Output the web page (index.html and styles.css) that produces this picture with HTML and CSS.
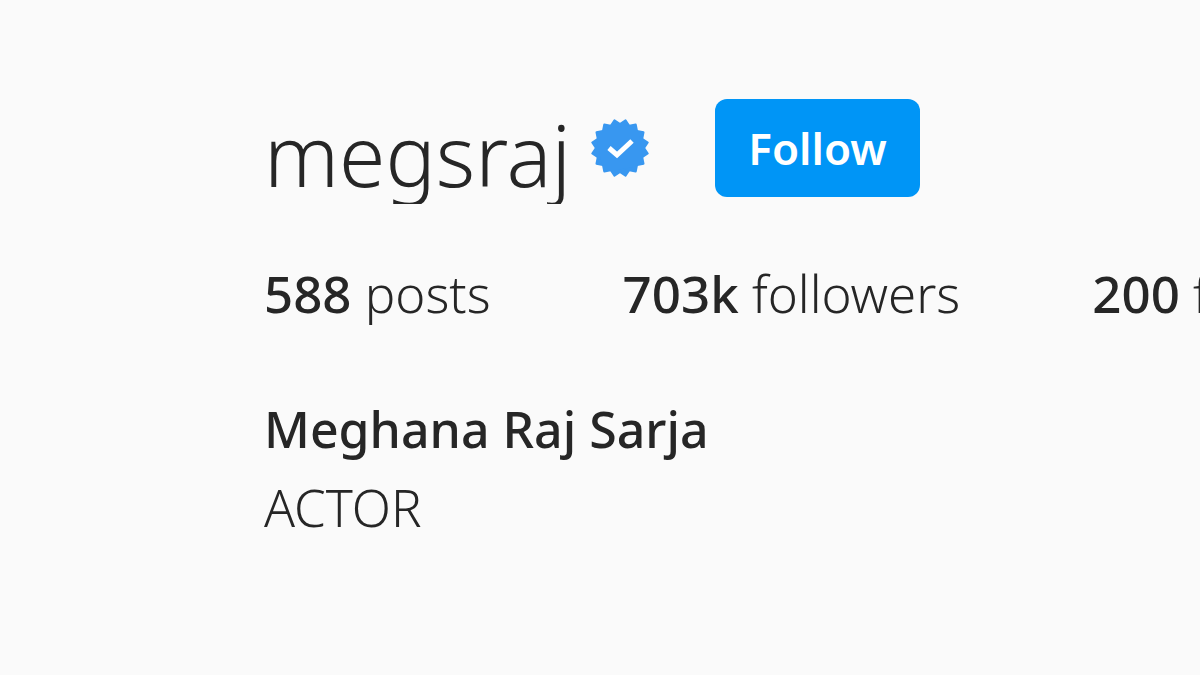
FILE: index.html
```html
<!DOCTYPE html>
<html lang="en">
<head>
  <meta charset="UTF-8">
  <meta name="viewport" content="width=device-width, initial-scale=1">
  <title>megsraj</title>
  <link rel="stylesheet" href="styles.css">
</head>
<body>
<header class="profile">
  <div class="profile-top">
    <h2 class="username">megsraj</h2>
    <svg class="verified" viewBox="0 0 60 60" role="img" aria-label="Verified">
      <g class="seal">
        <rect x="9" y="9" width="42" height="42" rx="1" transform="rotate(11.25 30 30)"/>
        <rect x="9" y="9" width="42" height="42" rx="1" transform="rotate(33.75 30 30)"/>
        <rect x="9" y="9" width="42" height="42" rx="1" transform="rotate(56.25 30 30)"/>
        <rect x="9" y="9" width="42" height="42" rx="1" transform="rotate(78.75 30 30)"/>
      </g>
      <path class="tick" d="M19 30L27 37L42 23"/>
    </svg>
    <button class="follow" type="button">Follow</button>
  </div>
  <ul class="stats">
    <li><span class="count">588</span> posts</li>
    <li><span class="count">703k</span> followers</li>
    <li><span class="count">200</span> following</li>
  </ul>
  <div class="bio">
    <h1 class="name">Meghana Raj Sarja</h1>
    <p class="about">ACTOR</p>
  </div>
</header>
</body>
</html>
```

FILE: styles.css
```css
* {
    box-sizing: border-box;
}

body {
    margin: 0;
    overflow-x: hidden;
    background: #fafafa;
    color: #262626;
    font-family: "Noto Sans", "Open Sans", sans-serif;
    font-size: 51px;
    line-height: 78px;
}

h1, h2, p, ul {
    margin: 0;
    padding: 0;
}

.profile {
    padding: 99px 0 0 264px;
}

.profile-top {
    display: flex;
    align-items: flex-start;
}

.username {
    height: 105px;
    overflow: hidden;
    font-size: 84px;
    font-weight: 300;
    line-height: 112px;
}

.verified {
    width: 60px;
    height: 60px;
    margin: 19px 0 0 19px;
}

.seal {
    fill: #3897f0;
}

.tick {
    fill: none;
    stroke: #fff;
    stroke-width: 5;
}

.follow {
    height: 98px;
    margin-left: 65px;
    padding: 0 33px;
    border: 0;
    border-radius: 12px;
    background: #0095f6;
    color: #fff;
    font-family: inherit;
    font-size: 44px;
    font-weight: 600;
}

.stats {
    display: flex;
    gap: 132px;
    margin-top: 50px;
    overflow: hidden;
    list-style: none;
    white-space: nowrap;
    font-weight: 300;
}

.count, .name {
    font-weight: 500;
}

.bio {
    margin-top: 58px;
}

.name {
    font-size: 50px;
}

.about {
    font-weight: 300;
}
```
